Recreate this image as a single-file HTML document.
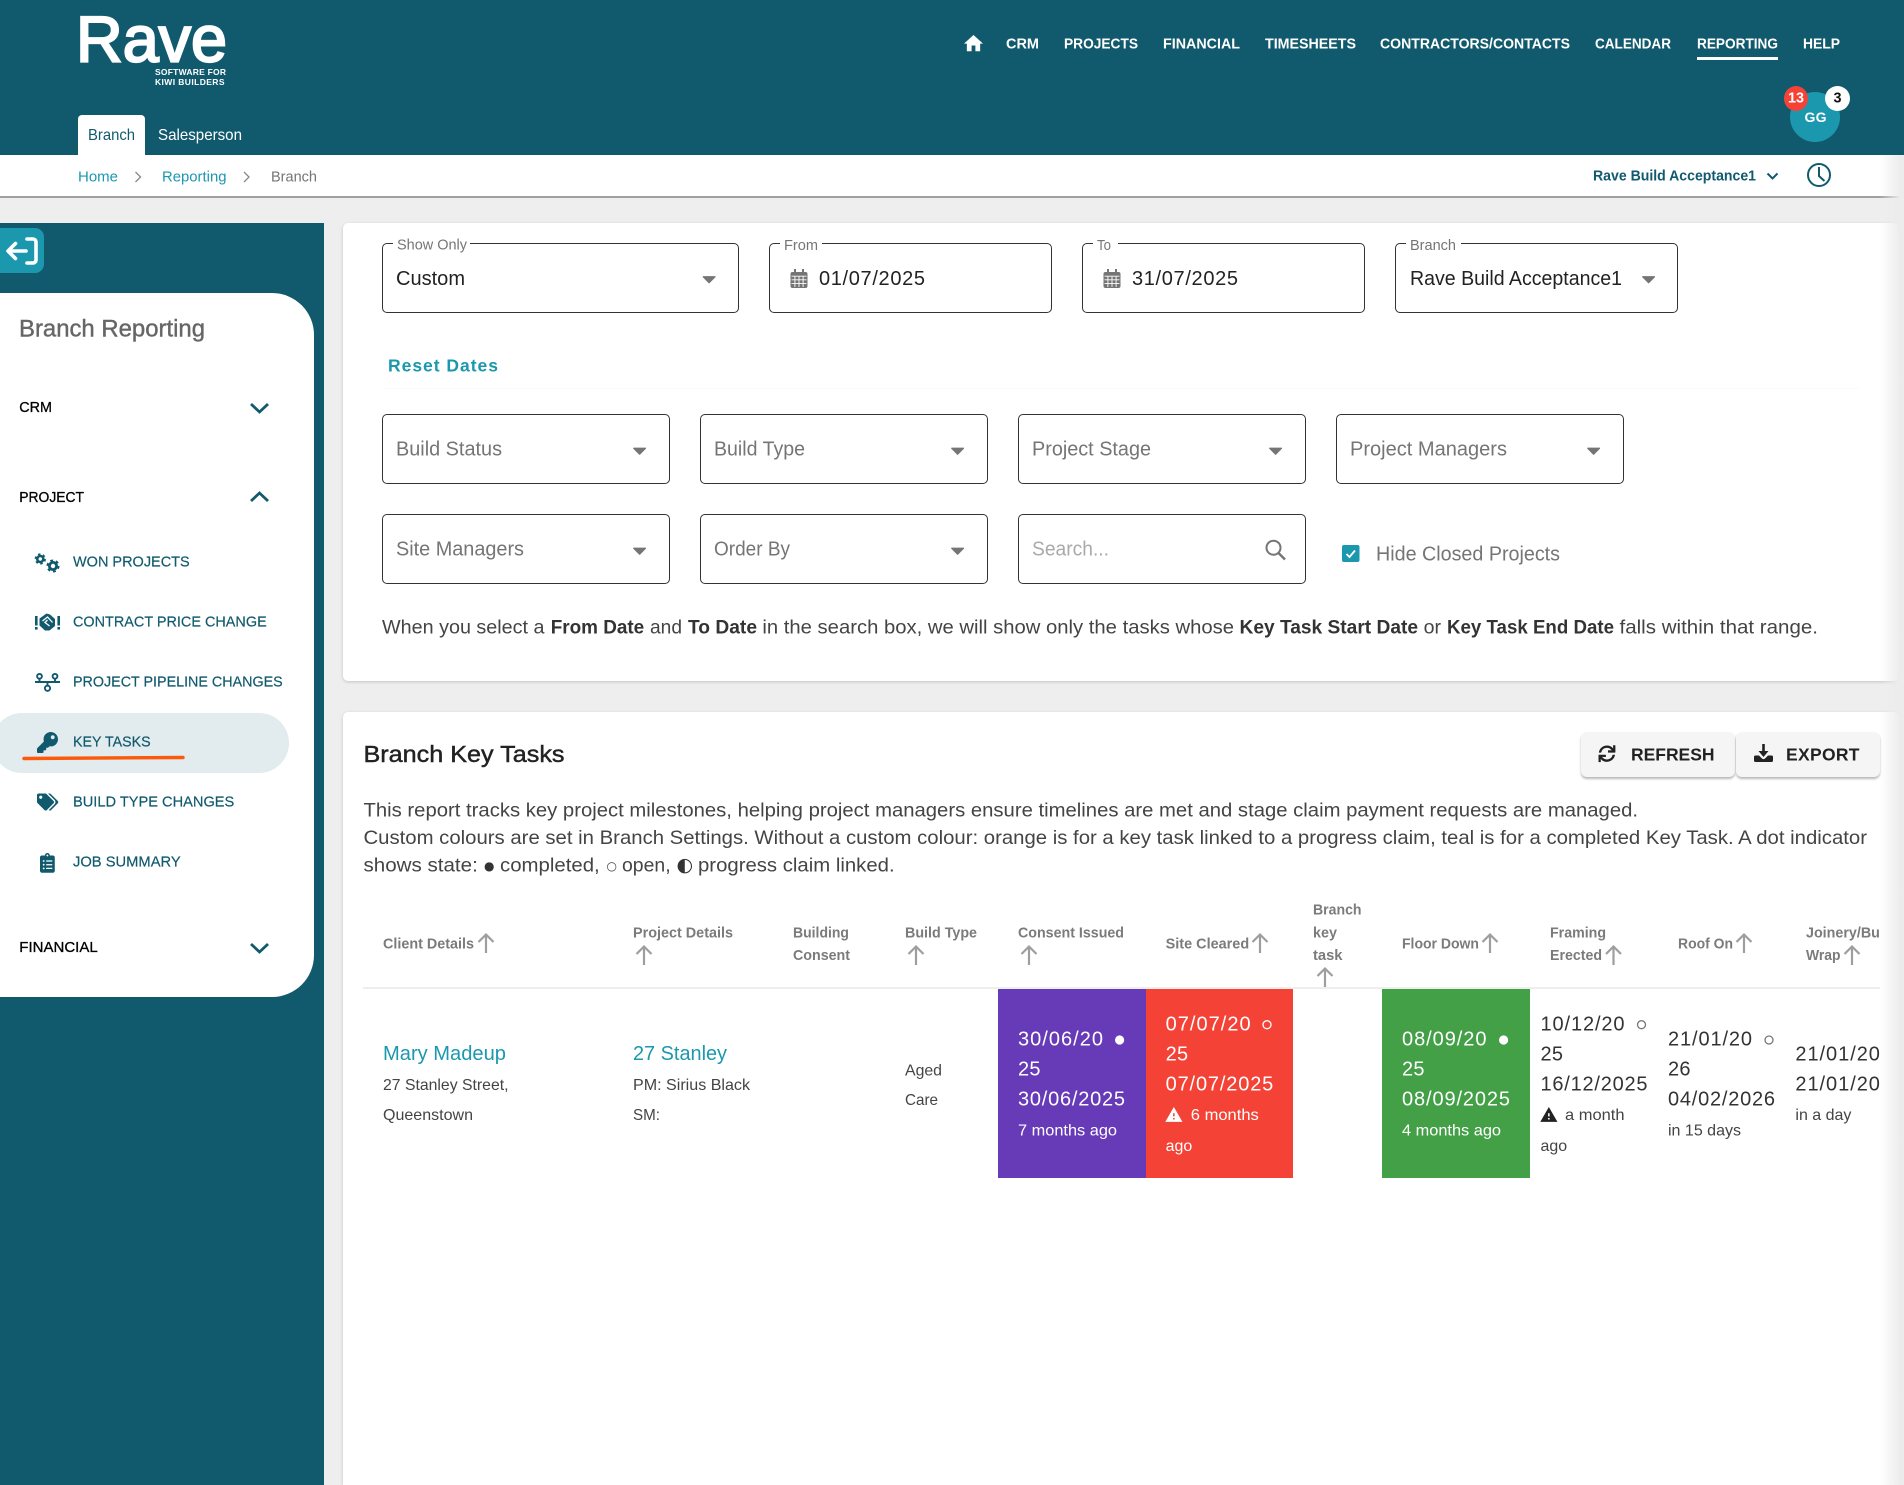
<!DOCTYPE html>
<html lang="en"><head><meta charset="utf-8"><title>Branch Key Tasks - Rave</title>
<style>
html,body{margin:0;padding:0;background:#eee;overflow:hidden;}
body{position:relative;width:1904px;height:1485px;overflow:hidden;font-family:"Liberation Sans",sans-serif;}
.a{position:absolute;box-sizing:border-box;}
.field{border:1.3px solid #333;border-radius:5px;background:#fff;}
.notch{position:absolute;background:#fff;height:6px;top:240px;}
svg{position:absolute;left:0;top:0;}
text{font-family:"Liberation Sans",sans-serif;white-space:pre;}
.w{fill:#fff}.b{font-weight:700}.m{stroke:currentColor;stroke-width:.3}
.n{font-size:15px;font-weight:700;fill:#fff}
.bc{font-size:15px}
.sh{font-size:15px;fill:#000;color:#000}
.si{font-size:15px;fill:#115a6e;stroke:#115a6e;stroke-width:.2}
.lb{font-size:15px;fill:#757575}
.v{font-size:20px;fill:#222}
.p{font-size:20px;fill:#757575}
.d{font-size:19.5px;fill:#444}
.db{font-size:19.5px;fill:#333;font-weight:700}
.h{font-size:15px;font-weight:700;fill:#7b7b7b}
.c{font-size:16px;fill:#444}
.dt{font-size:20px}
.l{font-size:20px;fill:#1b98ae}
.sy{font-family:"DejaVu Sans",sans-serif}
</style></head><body>
<div class="a" style="left:0;top:0;width:1904px;height:155px;background:#115a6e"></div>
<div class="a" style="left:78px;top:115px;width:67px;height:40px;background:#fff;border-radius:4px 4px 0 0"></div>
<div class="a" style="left:0;top:155px;width:1904px;height:43px;background:#fff;border-bottom:2px solid #a0a0a0"></div>
<div class="a" style="left:0;top:223px;width:324px;height:1262px;background:#115a6e"></div>
<div class="a" style="left:0;top:228px;width:44px;height:45px;background:#1b98ae;border-radius:0 9px 9px 0"></div>
<div class="a" style="left:0;top:293px;width:314px;height:704px;background:#fff;border-radius:0 42px 42px 0"></div>
<div class="a" style="left:-8px;top:713px;width:297px;height:60px;background:#e2ebee;border-radius:30px"></div>
<div class="a" style="left:343px;top:223px;width:1556px;height:458px;background:#fff;border-radius:5px;box-shadow:0 1px 3px rgba(0,0,0,.18)"></div>
<div class="a" style="left:343px;top:712px;width:1556px;height:773px;background:#fff;border-radius:5px 5px 0 0;box-shadow:0 1px 3px rgba(0,0,0,.18)"></div>
<div class="a" style="left:382px;top:388px;width:1478px;height:1px;background:#fbfbfb"></div>
<div class="a field" style="left:382px;top:243px;width:357px;height:70px"></div>
<div class="a field" style="left:769px;top:243px;width:283px;height:70px"></div>
<div class="a field" style="left:1082px;top:243px;width:283px;height:70px"></div>
<div class="a field" style="left:1395px;top:243px;width:283px;height:70px"></div>
<div class="notch" style="left:393px;width:77px"></div>
<div class="notch" style="left:780px;width:42px"></div>
<div class="notch" style="left:1093px;width:25px"></div>
<div class="notch" style="left:1406px;width:55px"></div>
<div class="a field" style="left:382px;top:414px;width:288px;height:70px"></div>
<div class="a field" style="left:700px;top:414px;width:288px;height:70px"></div>
<div class="a field" style="left:1018px;top:414px;width:288px;height:70px"></div>
<div class="a field" style="left:1336px;top:414px;width:288px;height:70px"></div>
<div class="a field" style="left:382px;top:514px;width:288px;height:70px"></div>
<div class="a field" style="left:700px;top:514px;width:288px;height:70px"></div>
<div class="a field" style="left:1018px;top:514px;width:288px;height:70px"></div>
<div class="a" style="left:1581px;top:732px;width:154px;height:45px;background:#f5f5f5;border-radius:6px;box-shadow:0 2px 2px rgba(0,0,0,.28)"></div>
<div class="a" style="left:1736px;top:732px;width:144px;height:45px;background:#f5f5f5;border-radius:6px;box-shadow:0 2px 2px rgba(0,0,0,.28)"></div>
<div class="a" style="left:363px;top:987px;width:1517px;height:2px;background:#eee"></div>
<div class="a" style="left:998px;top:989px;width:148px;height:189px;background:#673ab7"></div>
<div class="a" style="left:1146px;top:989px;width:147px;height:189px;background:#f44336"></div>
<div class="a" style="left:1382px;top:989px;width:148px;height:189px;background:#43a047"></div>
<div class="a" style="left:1790px;top:92px;width:50px;height:50px;border-radius:50%;background:#1b98ae"></div>
<div class="a" style="left:1784px;top:86px;width:24px;height:25px;border-radius:50%;background:#f44336"></div>
<div class="a" style="left:1825px;top:86px;width:25px;height:25px;border-radius:50%;background:#fff"></div>
<div class="a" style="left:1697px;top:57px;width:81px;height:3px;background:#fff"></div>

<svg width="1904" height="1485" viewBox="0 0 1904 1485" xmlns="http://www.w3.org/2000/svg">
<defs>
<clipPath id="cl"><rect x="0" y="0" width="1880" height="1485"/></clipPath>
<path id="ua" d="M9 20V1.5M1.5 9L9 1.5L16.5 9" fill="none" stroke="#9e9e9e" stroke-width="2.2"/>
<path id="tri" d="M.8.8h11.6L6.6 6.6z" fill="#757575" stroke="#757575" stroke-width="1.4" stroke-linejoin="round"/>
<g id="cal"><path d="M3.5 0h2v3h6V0h2v3H15a2 2 0 0 1 2 2v12a2 2 0 0 1-2 2H2a2 2 0 0 1-2-2V5a2 2 0 0 1 2-2h1.5z" fill="#757575"/><path d="M1 7.2h15M1 10.8h15M1 14.4h15M4.4 7v11M8.5 7v11M12.6 7v11" stroke="#fff" stroke-width=".9" fill="none"/></g>
<path id="warn" d="M1 21h22L12 2 1 21zm12-3h-2v-2h2v2zm0-4h-2v-4h2v4z"/>
</defs>

<!-- logo -->
<text x="76" y="61.5" font-size="65" class="w" stroke="#fff" stroke-width="2.2" textLength="151" lengthAdjust="spacingAndGlyphs">Rave</text>
<text x="155" y="75" font-size="8.5" class="w b" textLength="71">SOFTWARE FOR</text>
<text x="155" y="85" font-size="8.5" class="w b" textLength="69.5">KIWI BUILDERS</text>
<text x="88" y="140" font-size="16" fill="#115a6e" textLength="47" lengthAdjust="spacingAndGlyphs">Branch</text>
<text x="158" y="140" font-size="16" class="w" textLength="84" lengthAdjust="spacingAndGlyphs">Salesperson</text>

<!-- nav -->
<path d="M10 20v-6h4v6h5v-8h3L12 3 2 12h3v8z" fill="#fff" transform="translate(962.1 32.2) scale(.95)"/>
<text x="1006" y="48.5" class="n" textLength="33" lengthAdjust="spacingAndGlyphs">CRM</text>
<text x="1064" y="48.5" class="n" textLength="74" lengthAdjust="spacingAndGlyphs">PROJECTS</text>
<text x="1163" y="48.5" class="n" textLength="77" lengthAdjust="spacingAndGlyphs">FINANCIAL</text>
<text x="1265" y="48.5" class="n" textLength="91" lengthAdjust="spacingAndGlyphs">TIMESHEETS</text>
<text x="1380" y="48.5" class="n" textLength="190" lengthAdjust="spacingAndGlyphs">CONTRACTORS/CONTACTS</text>
<text x="1595" y="48.5" class="n" textLength="76" lengthAdjust="spacingAndGlyphs">CALENDAR</text>
<text x="1697" y="48.5" class="n" textLength="81" lengthAdjust="spacingAndGlyphs">REPORTING</text>
<text x="1803" y="48.5" class="n" textLength="37" lengthAdjust="spacingAndGlyphs">HELP</text>

<text x="1804.5" y="122" font-size="14" class="w b" textLength="22">GG</text>
<text x="1788" y="102.5" font-size="15" class="w b" textLength="16" lengthAdjust="spacingAndGlyphs">13</text>
<text x="1833.5" y="102.5" font-size="15" class="b" fill="#111" textLength="8" lengthAdjust="spacingAndGlyphs">3</text>

<!-- breadcrumb -->
<text x="78" y="181.5" class="bc" fill="#1b98ae" textLength="40" lengthAdjust="spacingAndGlyphs">Home</text>
<path d="M135.5 172L140.5 177L135.5 182" fill="none" stroke="#888" stroke-width="1.3"/>
<text x="162" y="181.5" class="bc" fill="#1b98ae" textLength="64.5" lengthAdjust="spacingAndGlyphs">Reporting</text>
<path d="M244 172L249 177L244 182" fill="none" stroke="#888" stroke-width="1.3"/>
<text x="271" y="181.5" class="bc" fill="#757575" textLength="46" lengthAdjust="spacingAndGlyphs">Branch</text>
<text x="1593" y="180.5" class="bc b" fill="#115a6e" textLength="163" lengthAdjust="spacingAndGlyphs">Rave Build Acceptance1</text>
<path d="M1767.5 173.5L1772.5 178.5L1777.5 173.5" fill="none" stroke="#115a6e" stroke-width="2"/>
<circle cx="1819" cy="175" r="11" fill="none" stroke="#115a6e" stroke-width="2"/>
<path d="M1819 167v9l5.5 5" fill="none" stroke="#115a6e" stroke-width="2"/>

<!-- sidebar -->
<path d="M26 251H8.5M15.5 243.5L8 251l7.5 7.5M27 239h6a3 3 0 0 1 3 3v18a3 3 0 0 1-3 3h-6" fill="none" stroke="#fff" stroke-width="3.6" stroke-linecap="round" stroke-linejoin="round"/>
<text x="19" y="336.7" font-size="24" fill="#666" stroke="#666" stroke-width=".4" textLength="186" lengthAdjust="spacingAndGlyphs">Branch Reporting</text>
<text x="19.3" y="412" class="sh m" textLength="32.7" lengthAdjust="spacingAndGlyphs">CRM</text>
<path d="M251 404l8.5 8L268 404" fill="none" stroke="#115a6e" stroke-width="2.8"/>
<text x="19.3" y="502" class="sh m" textLength="64.7" lengthAdjust="spacingAndGlyphs">PROJECT</text>
<path d="M251 501l8.5-8L268 501" fill="none" stroke="#115a6e" stroke-width="2.8"/>
<text x="73" y="566.5" class="si" textLength="116.7" lengthAdjust="spacingAndGlyphs">WON PROJECTS</text>
<text x="73" y="626.5" class="si" textLength="193.7" lengthAdjust="spacingAndGlyphs">CONTRACT PRICE CHANGE</text>
<text x="73" y="686.5" class="si" textLength="209.7" lengthAdjust="spacingAndGlyphs">PROJECT PIPELINE CHANGES</text>
<text x="73" y="746.5" class="si" textLength="77.7" lengthAdjust="spacingAndGlyphs">KEY TASKS</text>
<text x="73" y="806.5" class="si" textLength="161.3" lengthAdjust="spacingAndGlyphs">BUILD TYPE CHANGES</text>
<text x="73" y="866.5" class="si" textLength="107.7" lengthAdjust="spacingAndGlyphs">JOB SUMMARY</text>
<text x="19.3" y="952" class="sh m" textLength="78.4" lengthAdjust="spacingAndGlyphs">FINANCIAL</text>
<path d="M251 944l8.5 8L268 944" fill="none" stroke="#115a6e" stroke-width="2.8"/>
<path d="M24 758.5L183 757.5" stroke="#fb5a0c" stroke-width="3.4" stroke-linecap="round" fill="none"/>
<!-- sidebar icons -->
<g fill="none" stroke="#115a6e">
<circle cx="40.3" cy="559" r="3" stroke-width="2.6"/><circle cx="40.3" cy="559" r="4.8" stroke-width="1.7" stroke-dasharray="2.5 2.53"/>
<circle cx="53" cy="566" r="3.6" stroke-width="2.8"/><circle cx="53" cy="566" r="5.6" stroke-width="1.9" stroke-dasharray="2.9 2.96"/>
</g>
<g fill="#115a6e"><rect x="35" y="616" width="2.6" height="9.5"/><rect x="35" y="627" width="2.6" height="2.6"/><rect x="57.4" y="616" width="2.6" height="9.5"/><rect x="57.4" y="627" width="2.6" height="2.6"/>
<path d="M39.5 618.5l7-5 3.5 1 5 4.5v7l-5.5 4.5h-4.5l-5.5-5z"/></g>
<path d="M42.5 621l5-4 5 5.5M47.5 620l-2.5 2.5 4.5 3.5" fill="none" stroke="#fff" stroke-width="1.3"/>
<g fill="none" stroke="#115a6e" stroke-width="1.9"><path d="M35 682h25M39.5 679v3M55 679v3M47.5 682v3.5"/><circle cx="39.5" cy="676.3" r="2.4"/><circle cx="55" cy="676.3" r="2.4"/><circle cx="47.5" cy="688.3" r="2.6"/></g>
<path transform="translate(37 732) scale(.041)" fill="#115a6e" d="M512 176.001C512 273.203 433.202 352 336 352c-11.22 0-22.19-1.062-32.827-3.069l-24.012 27.014A23.999 23.999 0 0 1 261.223 384H224v40c0 13.255-10.745 24-24 24h-40v40c0 13.255-10.745 24-24 24H24c-13.255 0-24-10.745-24-24v-78.059c0-6.365 2.529-12.47 7.029-16.971l161.802-161.802C163.108 213.814 160 195.271 160 176 160 78.798 238.797.001 335.999 0 433.488-.001 512 78.511 512 176.001zM336 128c0 26.51 21.49 48 48 48s48-21.49 48-48-21.49-48-48-48-48 21.49-48 48z"/>
<path transform="translate(37 793.5) scale(.0333)" fill="#115a6e" d="M497.941 225.941L286.059 14.059A48 48 0 0 0 252.118 0H48C21.49 0 0 21.49 0 48v204.118a48 48 0 0 0 14.059 33.941l211.882 211.882c18.744 18.745 49.136 18.746 67.882 0l204.118-204.118c18.745-18.745 18.745-49.137 0-67.882zM112 160c-26.51 0-48-21.49-48-48s21.49-48 48-48 48 21.49 48 48-21.49 48-48 48zm513.941 133.823L421.823 497.941c-18.745 18.745-49.137 18.745-67.882 0l-.36-.36L527.64 323.522c16.999-16.999 26.36-39.6 26.36-63.64s-9.362-46.641-26.36-63.64L331.397 0h48.721a48 48 0 0 1 33.941 14.059l211.882 211.882c18.745 18.745 18.745 49.137 0 67.882z"/>
<path transform="translate(40 853) scale(.0385)" fill="#115a6e" d="M336 64h-80c0-35.3-28.7-64-64-64s-64 28.7-64 64H48C21.5 64 0 85.5 0 112v352c0 26.5 21.5 48 48 48h288c26.5 0 48-21.5 48-48V112c0-26.5-21.5-48-48-48zM96 424c-13.3 0-24-10.7-24-24s10.7-24 24-24 24 10.7 24 24-10.7 24-24 24zm0-96c-13.3 0-24-10.7-24-24s10.7-24 24-24 24 10.7 24 24-10.7 24-24 24zm0-96c-13.3 0-24-10.7-24-24s10.7-24 24-24 24 10.7 24 24-10.7 24-24 24zm96-192c13.3 0 24 10.7 24 24s-10.7 24-24 24-24-10.7-24-24 10.7-24 24-24zm128 368c0 4.4-3.6 8-8 8H168c-4.4 0-8-3.6-8-8v-16c0-4.4 3.6-8 8-8h144c4.4 0 8 3.6 8 8v16zm0-96c0 4.4-3.6 8-8 8H168c-4.4 0-8-3.6-8-8v-16c0-4.4 3.6-8 8-8h144c4.4 0 8 3.6 8 8v16zm0-96c0 4.4-3.6 8-8 8H168c-4.4 0-8-3.6-8-8v-16c0-4.4 3.6-8 8-8h144c4.4 0 8 3.6 8 8v16z"/>

<!-- filter row 1 -->
<text x="397" y="249.7" class="lb" textLength="70" lengthAdjust="spacingAndGlyphs">Show Only</text>
<text x="784" y="250" class="lb" textLength="34" lengthAdjust="spacingAndGlyphs">From</text>
<text x="1097" y="250" class="lb" textLength="14" lengthAdjust="spacingAndGlyphs">To</text>
<text x="1410" y="250" class="lb" textLength="46" lengthAdjust="spacingAndGlyphs">Branch</text>
<text x="396" y="285" class="v" textLength="69" lengthAdjust="spacingAndGlyphs">Custom</text>
<use href="#tri" x="702.5" y="276"/>
<use href="#cal" x="790.5" y="269"/>
<text x="819" y="285" class="v" textLength="106">01/07/2025</text>
<use href="#cal" x="1103.5" y="269"/>
<text x="1132" y="285" class="v" textLength="106">31/07/2025</text>
<text x="1410" y="285" class="v" textLength="212" lengthAdjust="spacingAndGlyphs">Rave Build Acceptance1</text>
<use href="#tri" x="1642" y="276"/>
<text x="388" y="371.5" font-size="17.5" class="b" fill="#1b98ae" textLength="110">Reset Dates</text>

<!-- filter row 2 -->
<text x="396" y="455.7" class="p" textLength="106" lengthAdjust="spacingAndGlyphs">Build Status</text>
<use href="#tri" x="633" y="447.5"/>
<text x="714" y="455.7" class="p" textLength="91" lengthAdjust="spacingAndGlyphs">Build Type</text>
<use href="#tri" x="951" y="447.5"/>
<text x="1032" y="455.7" class="p" textLength="119" lengthAdjust="spacingAndGlyphs">Project Stage</text>
<use href="#tri" x="1269" y="447.5"/>
<text x="1350" y="455.7" class="p" textLength="157" lengthAdjust="spacingAndGlyphs">Project Managers</text>
<use href="#tri" x="1587" y="447.5"/>

<!-- filter row 3 -->
<text x="396" y="555.7" class="p" textLength="128" lengthAdjust="spacingAndGlyphs">Site Managers</text>
<use href="#tri" x="633" y="547.5"/>
<text x="714" y="555.7" class="p" textLength="76" lengthAdjust="spacingAndGlyphs">Order By</text>
<use href="#tri" x="951" y="547.5"/>
<text x="1032" y="555.7" font-size="20" fill="#aaa" textLength="77" lengthAdjust="spacingAndGlyphs">Search...</text>
<circle cx="1273.5" cy="547.7" r="7" fill="none" stroke="#757575" stroke-width="2"/>
<path d="M1278.5 553l6.5 6.5" stroke="#757575" stroke-width="2.4" fill="none"/>
<rect x="1342" y="545" width="17.5" height="17" rx="2" fill="#1b98ae"/>
<path d="M1346.5 554l3 3 5.5-6.5" fill="none" stroke="#fff" stroke-width="1.8"/>
<text x="1376" y="560.7" class="p" textLength="184" lengthAdjust="spacingAndGlyphs">Hide Closed Projects</text>

<!-- info text -->
<text x="382" y="633.5" class="d" textLength="162.5" lengthAdjust="spacingAndGlyphs">When you select a</text>
<text x="550.7" y="633.5" class="db" textLength="93.5" lengthAdjust="spacingAndGlyphs">From Date</text>
<text x="650" y="633.5" class="d" textLength="32" lengthAdjust="spacingAndGlyphs">and</text>
<text x="688" y="633.5" class="db" textLength="69" lengthAdjust="spacingAndGlyphs">To Date</text>
<text x="762.4" y="633.5" class="d" textLength="471.6" lengthAdjust="spacingAndGlyphs">in the search box, we will show only the tasks whose</text>
<text x="1239.5" y="633.5" class="db" textLength="178.5" lengthAdjust="spacingAndGlyphs">Key Task Start Date</text>
<text x="1423.6" y="633.5" class="d" textLength="17.4" lengthAdjust="spacingAndGlyphs">or</text>
<text x="1447" y="633.5" class="db" textLength="167" lengthAdjust="spacingAndGlyphs">Key Task End Date</text>
<text x="1619.5" y="633.5" class="d" textLength="198.5" lengthAdjust="spacingAndGlyphs">falls within that range.</text>

<!-- card 2 head -->
<text x="363.5" y="762" font-size="23.5" fill="#222" stroke="#222" stroke-width=".45" textLength="201" lengthAdjust="spacingAndGlyphs">Branch Key Tasks</text>
<path transform="translate(1598.5 745.2) scale(.033)" fill="#222" d="M440.65 12.57l4 82.77A247.16 247.16 0 0 0 255.83 8C134.73 8 33.91 94.92 12.29 209.82A12 12 0 0 0 24.09 224h49.05a12 12 0 0 0 11.67-9.26 175.91 175.91 0 0 1 317-56.94l-101.46-4.86a12 12 0 0 0-12.57 12v47.41a12 12 0 0 0 12 12H500a12 12 0 0 0 12-12V12a12 12 0 0 0-12-12h-47.37a12 12 0 0 0-11.98 12.57zM255.83 432a175.61 175.61 0 0 1-146-77.8l101.8 4.87a12 12 0 0 0 12.57-12v-47.4a12 12 0 0 0-12-12H12a12 12 0 0 0-12 12V500a12 12 0 0 0 12 12h47.35a12 12 0 0 0 12-12.6l-4.15-82.57A247.17 247.17 0 0 0 255.83 504c121.11 0 221.93-86.92 243.55-201.82a12 12 0 0 0-11.8-14.18h-49.05a12 12 0 0 0-11.67 9.26A175.86 175.86 0 0 1 255.83 432z"/>
<text x="1631" y="760.3" font-size="17.5" class="b" fill="#222" textLength="83.5">REFRESH</text>
<path d="M1762.2 744h2.6v7h3.7l-5 6-5-6h3.7z" fill="#222"/>
<path d="M1755.5 755.5h3.5l3 3a2 2 0 0 0 3 0l3-3h3.5a1.5 1.5 0 0 1 1.5 1.5v3.5a1.5 1.5 0 0 1-1.5 1.5h-16a1.5 1.5 0 0 1-1.5-1.5V757a1.5 1.5 0 0 1 1.5-1.5z" fill="#222"/>
<text x="1786" y="760.3" font-size="17.5" class="b" fill="#222" textLength="73.5">EXPORT</text>

<text x="363.5" y="816.7" class="d" textLength="1274.5" lengthAdjust="spacingAndGlyphs">This report tracks key project milestones, helping project managers ensure timelines are met and stage claim payment requests are managed.</text>
<text x="363.5" y="844" class="d" textLength="1503.5" lengthAdjust="spacingAndGlyphs">Custom colours are set in Branch Settings. Without a custom colour: orange is for a key task linked to a progress claim, teal is for a completed Key Task. A dot indicator</text>
<text x="363.5" y="871.7" class="d" textLength="114.3" lengthAdjust="spacingAndGlyphs">shows state:</text>
<text x="484" y="870" font-size="12" fill="#333" class="sy" style="font-family:'DejaVu Sans',sans-serif">●</text>
<text x="500" y="871.7" class="d" textLength="99.7" lengthAdjust="spacingAndGlyphs">completed,</text>
<text x="606.5" y="870" font-size="12" fill="#444" style="font-family:'DejaVu Sans',sans-serif">○</text>
<text x="622" y="871.7" class="d" textLength="48.6" lengthAdjust="spacingAndGlyphs">open,</text>
<text x="676.5" y="870.8" font-size="19" fill="#333" style="font-family:'DejaVu Sans',sans-serif">◐</text>
<text x="698" y="871.7" class="d" textLength="196.6" lengthAdjust="spacingAndGlyphs">progress claim linked.</text>

<!-- table head -->
<text x="383" y="948.7" class="h" textLength="91" lengthAdjust="spacingAndGlyphs">Client Details</text><use href="#ua" x="477" y="933"/>
<text x="633" y="937.3" class="h" textLength="100" lengthAdjust="spacingAndGlyphs">Project Details</text><use href="#ua" x="635" y="945"/>
<text x="793" y="937.3" class="h" textLength="56" lengthAdjust="spacingAndGlyphs">Building</text>
<text x="793" y="960" class="h" textLength="57" lengthAdjust="spacingAndGlyphs">Consent</text>
<text x="905" y="937.3" class="h" textLength="72" lengthAdjust="spacingAndGlyphs">Build Type</text><use href="#ua" x="907" y="945"/>
<text x="1018" y="937.3" class="h" textLength="106" lengthAdjust="spacingAndGlyphs">Consent Issued</text><use href="#ua" x="1020" y="945"/>
<text x="1165.6" y="948.7" class="h" textLength="83.6" lengthAdjust="spacingAndGlyphs">Site Cleared</text><use href="#ua" x="1251" y="933"/>
<text x="1313" y="914.7" class="h" textLength="48.5" lengthAdjust="spacingAndGlyphs">Branch</text>
<text x="1313" y="937.3" class="h" textLength="24" lengthAdjust="spacingAndGlyphs">key</text>
<text x="1313" y="960" class="h" textLength="29.5" lengthAdjust="spacingAndGlyphs">task</text><use href="#ua" x="1316" y="967"/>
<text x="1402" y="948.7" class="h" textLength="77" lengthAdjust="spacingAndGlyphs">Floor Down</text><use href="#ua" x="1481" y="933"/>
<text x="1550" y="937.3" class="h" textLength="56" lengthAdjust="spacingAndGlyphs">Framing</text>
<text x="1550" y="960" class="h" textLength="52" lengthAdjust="spacingAndGlyphs">Erected</text><use href="#ua" x="1604.5" y="945"/>
<text x="1678" y="948.7" class="h" textLength="55" lengthAdjust="spacingAndGlyphs">Roof On</text><use href="#ua" x="1735" y="933"/>
<g clip-path="url(#cl)">
<text x="1806" y="937.3" class="h" textLength="112" lengthAdjust="spacingAndGlyphs">Joinery/Building</text>
<text x="1806" y="960" class="h" textLength="34.5" lengthAdjust="spacingAndGlyphs">Wrap</text><use href="#ua" x="1843" y="945"/>
</g>

<!-- row -->
<text x="383" y="1060" class="l" textLength="123" lengthAdjust="spacingAndGlyphs">Mary Madeup</text>
<text x="383" y="1090" class="c" textLength="125.5" lengthAdjust="spacingAndGlyphs">27 Stanley Street,</text>
<text x="383" y="1120" class="c" textLength="90" lengthAdjust="spacingAndGlyphs">Queenstown</text>
<text x="633" y="1060" class="l" textLength="94" lengthAdjust="spacingAndGlyphs">27 Stanley</text>
<text x="633" y="1090" class="c" textLength="117" lengthAdjust="spacingAndGlyphs">PM: Sirius Black</text>
<text x="633" y="1120" class="c" textLength="27" lengthAdjust="spacingAndGlyphs">SM:</text>
<text x="905" y="1075.3" class="c" textLength="37" lengthAdjust="spacingAndGlyphs">Aged</text>
<text x="905" y="1105" class="c" textLength="33" lengthAdjust="spacingAndGlyphs">Care</text>

<g fill="#fff">
<text x="1018" y="1045.7" class="dt" textLength="85">30/06/20</text>
<circle cx="1119.6" cy="1040" r="4.6"/>
<text x="1018" y="1075.7" class="dt" textLength="22.5">25</text>
<text x="1018" y="1105.7" class="dt" textLength="107">30/06/2025</text>
<text x="1018" y="1135.7" font-size="16" textLength="99" lengthAdjust="spacingAndGlyphs">7 months ago</text>

<text x="1165.6" y="1030.7" class="dt" textLength="85">07/07/20</text>
<circle cx="1267" cy="1024.7" r="4" fill="none" stroke="#fff" stroke-width="1.3"/>
<text x="1165.6" y="1060.7" class="dt" textLength="22.5">25</text>
<text x="1165.6" y="1090.7" class="dt" textLength="107.7">07/07/2025</text>
<use href="#warn" transform="translate(1164.5 1105.5) scale(.78)"/>
<text x="1190.8" y="1120" font-size="16" textLength="68" lengthAdjust="spacingAndGlyphs">6 months</text>
<text x="1165.6" y="1151" font-size="16" textLength="26.6" lengthAdjust="spacingAndGlyphs">ago</text>

<text x="1402" y="1045.7" class="dt" textLength="84.5">08/09/20</text>
<circle cx="1503.6" cy="1040" r="4.6"/>
<text x="1402" y="1075.7" class="dt" textLength="22.5">25</text>
<text x="1402" y="1105.7" class="dt" textLength="108">08/09/2025</text>
<text x="1402" y="1135.7" font-size="16" textLength="99" lengthAdjust="spacingAndGlyphs">4 months ago</text>
</g>
<g fill="#333">
<text x="1540.5" y="1030.7" class="dt" textLength="84">10/12/20</text>
<circle cx="1641.5" cy="1024.7" r="4" fill="none" stroke="#777" stroke-width="1.3"/>
<text x="1540.5" y="1060.7" class="dt" textLength="22.5">25</text>
<text x="1540.5" y="1090.7" class="dt" textLength="107">16/12/2025</text>
<use href="#warn" fill="#222" transform="translate(1539.5 1105.5) scale(.78)"/>
<text x="1565" y="1120" font-size="16" fill="#444" textLength="59.5" lengthAdjust="spacingAndGlyphs">a month</text>
<text x="1540.5" y="1151" font-size="16" fill="#444" textLength="26.6" lengthAdjust="spacingAndGlyphs">ago</text>

<text x="1668" y="1045.7" class="dt" textLength="84">21/01/20</text>
<circle cx="1769" cy="1040" r="4" fill="none" stroke="#777" stroke-width="1.3"/>
<text x="1668" y="1075.7" class="dt" textLength="22.5">26</text>
<text x="1668" y="1105.7" class="dt" textLength="107">04/02/2026</text>
<text x="1668" y="1135.7" font-size="16" fill="#444" textLength="73" lengthAdjust="spacingAndGlyphs">in 15 days</text>

<text x="1795.4" y="1060.7" class="dt" textLength="84.5">21/01/20</text>
<text x="1795.4" y="1090.7" class="dt" textLength="84.5">21/01/20</text>
<text x="1795.4" y="1120" font-size="16" fill="#444" textLength="56" lengthAdjust="spacingAndGlyphs">in a day</text>
</g>
</svg>
<div class="a" style="left:1880px;top:155px;width:24px;height:1330px;background:linear-gradient(90deg,rgba(238,238,238,0),#ececec 85%)"></div>
</body></html>
